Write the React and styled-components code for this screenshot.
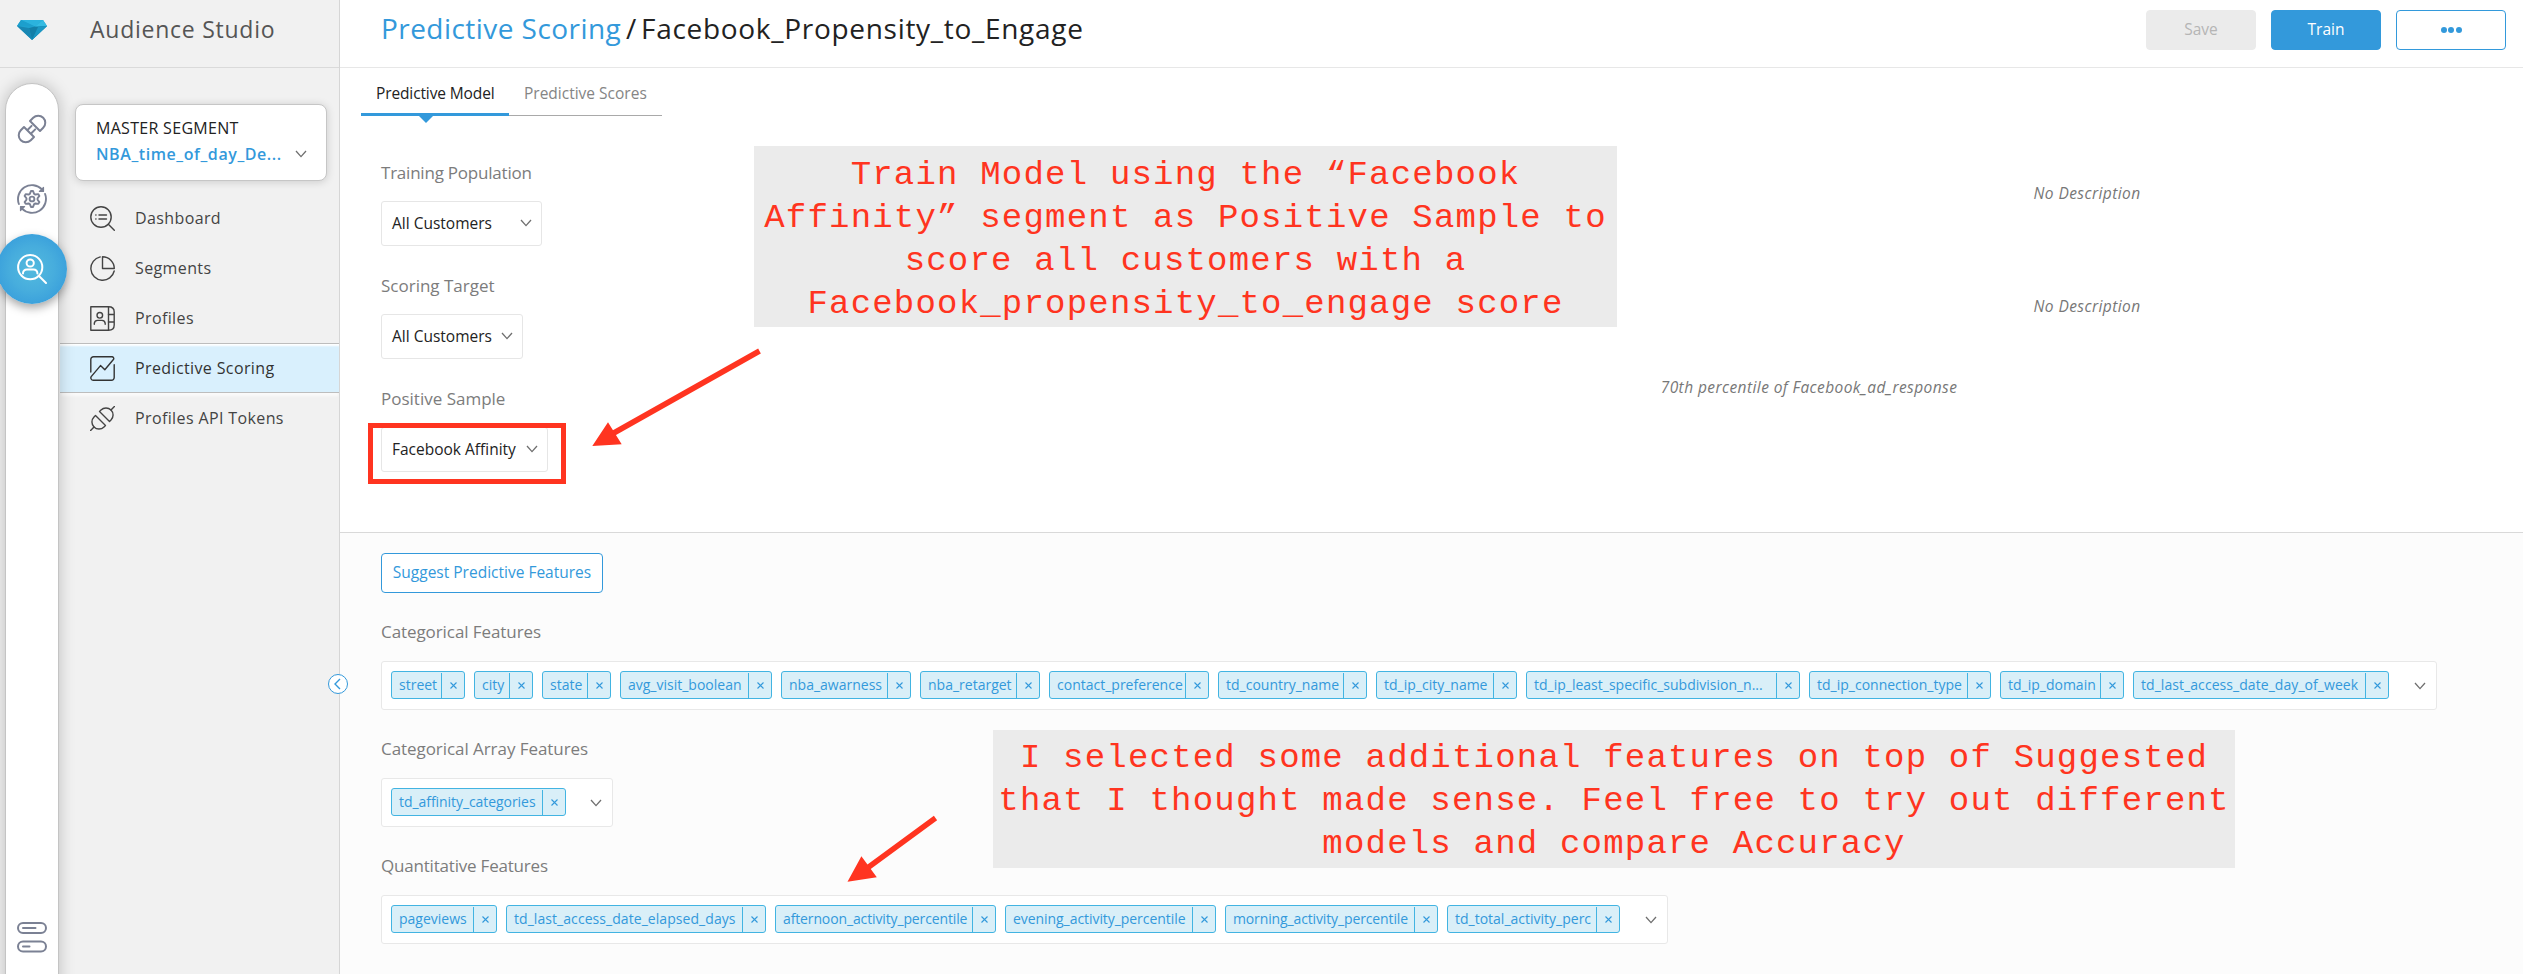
import React from "react";
import styled, { createGlobalStyle, css } from "styled-components";

const BLUE = "#3399db";
const RED = "#ff3420";

const GlobalStyle = createGlobalStyle`
  *, *::before, *::after { box-sizing: border-box; }
  body {
    margin: 0;
    font-family: "Open Sans", "Noto Sans", sans-serif;
    font-size: 16px;
    color: #222;
    background: #fff;
  }
`;

/* ---------- shell ---------- */

const Shell = styled.div`
  position: relative;
  display: flex;
  width: 2523px;
  height: 974px;
  overflow: hidden;
`;

const Sidebar = styled.aside`
  position: relative;
  display: flex;
  flex-direction: column;
  flex: none;
  width: 340px;
  background: #f1f1f1;
  border-right: 1px solid #d6d6d6;
`;

const Brand = styled.header`
  display: flex;
  flex: none;
  height: 68px;
  padding-left: 17px;
  border-bottom: 1px solid #dadada;

  svg { margin-top: 20px; }
`;

const BrandName = styled.span`
  margin-left: 43px;
  font-size: 23px;
  line-height: 58px;
  letter-spacing: 0.75px;
  color: #555;
  white-space: nowrap;
`;

const SidebarBody = styled.div`
  display: flex;
  flex: 1;
  overflow: hidden;
`;

const Rail = styled.div`
  position: relative;
  z-index: 1;
  display: flex;
  flex-direction: column;
  align-items: center;
  flex: none;
  width: 54px;
  margin: 15px 1px -40px 5px;
  padding: 30px 0 60px;
  background: #fff;
  border: 1px solid #c4c4c4;
  border-radius: 27px;
  box-shadow: 0 0 16px rgba(0, 0, 0, 0.22);
  color: #7b8194;
`;

const RailIcon = styled.div`
  height: 30px;
  margin-bottom: 40px;
  svg { display: block; }
`;

const RailActive = styled.div`
  display: flex;
  align-items: center;
  justify-content: center;
  width: 70px;
  height: 70px;
  margin-top: -20px;
  border-radius: 50%;
  background: radial-gradient(circle, #53bade 0%, #47addd 45%, #3399db 90%);
  box-shadow: 0 4px 10px rgba(0, 0, 0, 0.35);
  color: #fff;
`;

const RailBottom = styled.div`
  margin-top: auto;
  height: 31px;
`;

const SideNav = styled.nav`
  flex: 1;
  padding-top: 36px;
`;

const SegmentCard = styled.div`
  width: 252px;
  height: 77px;
  margin: 0 0 12px 15px;
  padding: 10px 19px 0 20px;
  background: #fff;
  border: 1px solid #c6c6c6;
  border-radius: 8px;
  box-shadow: 0 1px 9px rgba(0, 0, 0, 0.16);
  line-height: 26px;
  white-space: nowrap;
`;

const SegmentCaption = styled.div`
  letter-spacing: 0.3px;
  color: #222;
`;

const SegmentName = styled.div`
  display: flex;
  align-items: center;
  justify-content: space-between;
  font-weight: 600;
  letter-spacing: 0.58px;
  color: ${BLUE};
`;

const NavItem = styled.a`
  display: flex;
  align-items: center;
  gap: 20px;
  height: 50px;
  padding-left: 30px;
  line-height: 50px;
  letter-spacing: 0.38px;
  white-space: nowrap;
  color: #444;
  ${(p) =>
    p.$active &&
    css`
      background: #d9f0fd;
      border-top: 1px solid #bdbdbd;
      border-bottom: 1px solid #bdbdbd;
      box-shadow: 0 4px 2px -1px #fafafa, inset 0 3px 2px -1px #fff;
      color: #333;
      font-weight: 500;
    `}
`;

const CollapseToggle = styled.button`
  position: absolute;
  z-index: 2;
  top: 674px;
  right: -9px;
  display: flex;
  align-items: center;
  justify-content: center;
  width: 20px;
  height: 20px;
  padding: 0 2px 0 0;
  border: 1px solid ${BLUE};
  border-radius: 50%;
  background: #fff;
  color: ${BLUE};
`;

/* ---------- main column ---------- */

const Main = styled.main`
  display: flex;
  flex-direction: column;
  flex: 1;
  min-width: 0;
`;

const TitleBar = styled.header`
  display: flex;
  justify-content: space-between;
  flex: none;
  height: 68px;
  padding: 0 17px 0 41px;
  border-bottom: 1px solid #e7e7e7;
`;

const Title = styled.h1`
  display: flex;
  margin: 0;
  font-size: 28px;
  font-weight: 400;
  line-height: 57px;
  white-space: nowrap;
`;

const Crumb = styled.span`
  width: ${(p) => p.$w}px;
  letter-spacing: ${(p) => p.$track || 0}px;
  color: ${(p) => (p.$link ? BLUE : "#222")};
`;

const Actions = styled.div`
  display: flex;
  gap: 15px;
  padding-top: 10px;
`;

const actionTones = {
  disabled: css`background: #ebebeb; border-color: #ebebeb; color: #b5b5b5;`,
  primary: css`background: ${BLUE}; border-color: ${BLUE}; color: #fff;`,
  outline: css`background: #fff; border-color: ${BLUE}; color: ${BLUE};`,
};

const ActionButton = styled.button`
  display: flex;
  align-items: center;
  justify-content: center;
  width: 110px;
  height: 40px;
  padding: 0 0 2px;
  border: 1px solid;
  border-radius: 4px;
  font: 15.5px "Open Sans", sans-serif;
  ${(p) => actionTones[p.$tone]}
`;

const Dots = styled.span`
  display: flex;
  gap: 1.5px;
  padding-top: 2px;
  i { width: 6px; height: 6px; border-radius: 50%; background: currentColor; }
`;

const Tabs = styled.div`
  display: flex;
  height: 48px;
  margin-left: 21px;
`;

const Tab = styled.a`
  position: relative;
  width: ${(p) => p.$w}px;
  height: 48px;
  padding: 2px 0 0 15px;
  font-size: 15.5px;
  line-height: 46px;
  letter-spacing: ${(p) => p.$track || 0}px;
  white-space: nowrap;
  color: ${(p) => (p.$active ? "#222" : "#858585")};
  border-bottom: ${(p) => (p.$active ? `3px solid ${BLUE}` : "1px solid #a9a9a9")};

  ${(p) =>
    p.$active &&
    css`
      &::after {
        content: "";
        position: absolute;
        left: 58px;
        top: 48px;
        border: 7px solid transparent;
        border-top-color: ${BLUE};
        border-bottom: 0;
      }
    `}
`;

const PopulationSection = styled.section`
  flex: none;
  height: 417px;
  padding: 45px 0 0 41px;
  border-bottom: 1px solid #d9d9d9;
`;

const FieldRow = styled.div`
  display: flex;
  justify-content: space-between;
  height: 113px;
`;

const Label = styled.div`
  margin-bottom: ${(p) => p.$gap || 16}px;
  font-size: 17px;
  line-height: 24px;
  letter-spacing: ${(p) => p.$track || 0}px;
  white-space: nowrap;
  color: #7c7c7c;
`;

const Select = styled.div`
  display: flex;
  align-items: center;
  justify-content: space-between;
  width: ${(p) => p.$w}px;
  height: 45px;
  padding: 0 9px 2px 10px;
  border: 1px solid #e6e6e6;
  border-radius: 3px;
  background: #fff;
  font-size: 15.5px;
  white-space: nowrap;
  color: #222;
`;

const Description = styled.p`
  width: ${(p) => p.$w}px;
  margin: ${(p) => p.$top}px 0 0;
  font-size: 15.5px;
  font-style: italic;
  line-height: 24px;
  letter-spacing: 0.42px;
  text-align: center;
  color: #777;
`;

const FeatureSection = styled.section`
  flex: 1;
  padding: 20px 0 0 41px;
  background: #fcfcfc;
`;

const SuggestButton = styled.button`
  width: 222px;
  height: 40px;
  margin-bottom: 27px;
  padding: 0 0 2px;
  border: 1px solid ${BLUE};
  border-radius: 4px;
  background: #fff;
  color: ${BLUE};
  font: 15.5px "Open Sans", sans-serif;
  white-space: nowrap;
`;

const ChipBox = styled.div`
  display: flex;
  gap: 9px;
  width: ${(p) => p.$w}px;
  height: 49px;
  margin-bottom: 27px;
  padding: 9px 10px 0 9px;
  border: 1px solid #e8e8e8;
  border-radius: 3px;
  background: #fff;

  > svg { margin: 11px 0 0 auto; }
`;

const Chip = styled.span`
  display: flex;
  flex: none;
  width: ${(p) => p.$w}px;
  height: 28px;
  border: 1px solid #42b4e2;
  border-radius: 3px;
  background: #d9eff8;
  color: ${BLUE};
  font-size: 14px;
  line-height: 25px;
  white-space: nowrap;
`;

const ChipText = styled.span`
  flex: 1;
  padding-left: 7px;
  letter-spacing: ${(p) => p.$track || 0}px;
`;

const ChipRemove = styled.span`
  display: flex;
  align-items: center;
  justify-content: center;
  width: 23px;
  margin: 1px 0 0;
  border-left: 1px solid #42b4e2;
`;

/* ---------- annotations laid over the page ---------- */

const Note = styled.div`
  position: absolute;
  left: ${(p) => p.$x}px;
  top: ${(p) => p.$y}px;
  width: ${(p) => p.$w}px;
  height: ${(p) => p.$h}px;
  padding-top: ${(p) => p.$pad}px;
  background: #ebebeb;
  color: ${RED};
  font-family: "Liberation Mono", monospace;
  font-size: 34px;
  line-height: 43px;
  letter-spacing: 1.2px;
  text-align: center;
  white-space: pre;
`;

const Highlight = styled.div`
  position: absolute;
  left: 368px;
  top: 423px;
  width: 198px;
  height: 61px;
  border: 5px solid ${RED};
`;

const ArrowLayer = styled.svg`
  position: absolute;
  left: 0;
  top: 0;
  pointer-events: none;
`;

/* ---------- icons ---------- */

const Icon = ({ size, stroke = 2, children }) => (
  <svg
    width={size}
    height={size}
    viewBox={`0 0 ${size} ${size}`}
    fill="none"
    stroke="currentColor"
    strokeWidth={stroke}
    strokeLinecap="round"
    strokeLinejoin="round"
  >
    {children}
  </svg>
);

const DiamondLogo = () => (
  <svg width="30" height="20" viewBox="0 0 30 20">
    <path d="M4 0H26L30 6L15 20L0 6Z" fill="#1fa3d0" />
    <path d="M4 0H26L18 6.5Z" fill="#2bb3de" />
    <path d="M4 0L18 6.5L0 6Z" fill="#1c9fcd" />
    <path d="M0 6L12 8L15 20Z" fill="#1887b3" />
    <path d="M12 8L18 6.5L30 6L15 20Z" fill="#137fa8" />
    <path d="M26 0L30 6L18 6.5Z" fill="#35bbe2" />
    <path d="M30 6L15 20L21 7Z" fill="#1b98c4" />
  </svg>
);

const Chevron = () => (
  <svg width="12" height="8" viewBox="0 0 12 8" fill="none" stroke="#6f6f6f" strokeWidth="1.3">
    <path d="M1 1L6 6.6L11 1" />
  </svg>
);

const CloseGlyph = () => (
  <svg width="7" height="7" viewBox="0 0 7 7" stroke={BLUE} strokeWidth="1.1">
    <path d="M.5 .5L6.5 6.5M6.5 .5L.5 6.5" />
  </svg>
);

const ConnectorIcon = () => (
  <Icon size={30}>
    <path d="M13 7L23 17L26.2 13.8A7.07 7.07 0 0 0 16.2 3.8Z" />
    <path d="M7 13L17 23L13.8 26.2A7.07 7.07 0 0 1 3.8 16.2Z" />
    <path d="M11 15.5L14.6 11.9M14.6 19L18.2 15.4" />
  </Icon>
);

const gearPath = Array.from({ length: 24 }, (_, i) => {
  const angle = ((i * 15 - 82.5) * Math.PI) / 180;
  const radius = i % 4 === 3 || i % 4 === 0 ? 8 : 5.6;
  return `${i ? "L" : "M"}${(15 + radius * Math.cos(angle)).toFixed(2)} ${(15 + radius * Math.sin(angle)).toFixed(2)}`;
}).join("") + "Z";

const SyncGearIcon = () => (
  <Icon size={30} stroke={1.9}>
    <path d="M1.9 20A14 14 0 0 1 25 5.3M28.1 10A14 14 0 0 1 5 24.7" />
    <path d="M26.5 3.5V7.4H22.4ZM3.5 26.5V22.6H7.6Z" fill="currentColor" strokeWidth="1.2" />
    <path d={gearPath} />
    <circle cx="15" cy="15" r="2.4" />
  </Icon>
);

const AudienceIcon = () => (
  <Icon size={30} stroke={2}>
    <circle cx="13.2" cy="13.2" r="12.1" />
    <path d="M22 22L29 29" />
    <circle cx="13.2" cy="9" r="3.6" />
    <path d="M6 19.5V19A4 4 0 0 1 10 15.4H16.5A4 4 0 0 1 20.4 19V19.5" />
  </Icon>
);

const ToggleListIcon = () => (
  <svg width="30" height="31" viewBox="0 0 30 31" fill="none" stroke="currentColor" strokeWidth="2" strokeLinecap="round">
    <rect x="1" y="1" width="28" height="10" rx="5" />
    <rect x="1" y="19.5" width="28" height="10" rx="5" />
    <path d="M6 6H18.5M6 24.5H12.5" />
  </svg>
);

const DashboardIcon = () => (
  <Icon size={25} stroke={1.4}>
    <circle cx="11" cy="11" r="10.2" />
    <path d="M18.3 18.3L24.3 24.3M9 9H16.5M9 13H16.5M5.8 9H6M5.8 13H6" />
  </Icon>
);

const PieIcon = () => (
  <Icon size={25} stroke={1.4}>
    <path d="M10.2 .9A11.8 11.8 0 1 0 24.2 15" />
    <path d="M12.5 .8V12.5H24.3A11.8 11.8 0 0 0 12.5 .8Z" />
  </Icon>
);

const ProfilesIcon = () => (
  <Icon size={25} stroke={1.4}>
    <path d="M.8 .8H18.5V24.2H.8Z" />
    <path d="M18.5 .8C22 .8 24.2 2.6 24.2 6V19C24.2 22.4 22 24.2 18.5 24.2M18.5 8.5H24.2M18.5 16H24.2" />
    <circle cx="9.8" cy="9.3" r="2.8" />
    <path d="M4.3 18.3V17.5A3.3 3.3 0 0 1 7.5 14.4H12A3.3 3.3 0 0 1 15.2 17.5V18.3" />
  </Icon>
);

const ScoringIcon = () => (
  <Icon size={25} stroke={1.4}>
    <path d="M.8 16V3.5A2.7 2.7 0 0 1 3.5 .8H22A1.7 1.7 0 0 1 23.6 3.2L14.8 13.8L10.5 9.6L1.2 20.6C.2 22.2 1.4 24.2 3.2 24.2H21.5A2.7 2.7 0 0 0 24.2 21.5V8.8" />
  </Icon>
);

const PlugIcon = () => (
  <Icon size={25} stroke={1.4}>
    <path d="M9.5 5.5L19.5 15.5L21 14A7.07 7.07 0 0 0 11 4Z" />
    <path d="M5.5 9.5L15.5 19.5L14 21A7.07 7.07 0 0 1 4 11Z" />
    <path d="M.6 24.4L4 21M24.4 .6L21 4" />
  </Icon>
);

/* ---------- content ---------- */

const navItems = [
  { text: "Dashboard", icon: DashboardIcon },
  { text: "Segments", icon: PieIcon },
  { text: "Profiles", icon: ProfilesIcon },
  { text: "Predictive Scoring", icon: ScoringIcon, active: true },
  { text: "Profiles API Tokens", icon: PlugIcon },
];

const fields = [
  { label: "Training Population", track: -0.22, value: "All Customers", width: 161, note: "No Description", noteWidth: 872, noteTop: 20 },
  { label: "Scoring Target", value: "All Customers", width: 142, note: "No Description", noteWidth: 872, noteTop: 20 },
  { label: "Positive Sample", value: "Facebook Affinity", width: 167, note: "70th percentile of Facebook_ad_response", noteWidth: 1428, noteTop: -12 },
];

const featureGroups = [
  {
    label: "Categorical Features",
    track: -0.08,
    width: 2056,
    chips: [
      ["street", 74],
      ["city", 59],
      ["state", 69],
      ["avg_visit_boolean", 152],
      ["nba_awarness", 130],
      ["nba_retarget", 120],
      ["contact_preference", 160],
      ["td_country_name", 149],
      ["td_ip_city_name", 141],
      ["td_ip_least_specific_subdivision_n...", 274],
      ["td_ip_connection_type", 182],
      ["td_ip_domain", 124],
      ["td_last_access_date_day_of_week", 256, 0.06],
    ],
  },
  {
    label: "Categorical Array Features",
    track: -0.06,
    width: 232,
    chips: [["td_affinity_categories", 175, -0.06]],
  },
  {
    label: "Quantitative Features",
    track: -0.2,
    width: 1287,
    chips: [
      ["pageviews", 106],
      ["td_last_access_date_elapsed_days", 260, 0.06],
      ["afternoon_activity_percentile", 221, -0.13],
      ["evening_activity_percentile", 211, -0.06],
      ["morning_activity_percentile", 213, -0.13],
      ["td_total_activity_perc", 173],
    ],
  },
];

const noteOne = `Train Model using the “Facebook
Affinity” segment as Positive Sample to
score all customers with a
Facebook_propensity_to_engage score`;

const noteTwo = `I selected some additional features on top of Suggested
that I thought made sense. Feel free to try out different
models and compare Accuracy`;

export default function App() {
  return (
    <Shell>
      <GlobalStyle />
      <Sidebar>
        <Brand>
          <DiamondLogo />
          <BrandName>Audience Studio</BrandName>
        </Brand>
        <SidebarBody>
          <Rail>
            <RailIcon><ConnectorIcon /></RailIcon>
            <RailIcon><SyncGearIcon /></RailIcon>
            <RailActive><AudienceIcon /></RailActive>
            <RailBottom><ToggleListIcon /></RailBottom>
          </Rail>
          <SideNav>
            <SegmentCard>
              <SegmentCaption>MASTER SEGMENT</SegmentCaption>
              <SegmentName>
                NBA_time_of_day_De...
                <Chevron />
              </SegmentName>
            </SegmentCard>
            {navItems.map(({ text, icon: Glyph, active }) => (
              <NavItem key={text} $active={active}>
                <Glyph />
                {text}
              </NavItem>
            ))}
          </SideNav>
        </SidebarBody>
        <CollapseToggle aria-label="Collapse">
          <svg width="7" height="12" viewBox="0 0 7 12" fill="none" stroke="currentColor" strokeWidth="1.4">
            <path d="M6 1L1 6L6 11" />
          </svg>
        </CollapseToggle>
      </Sidebar>

      <Main>
        <TitleBar>
          <Title>
            <Crumb $link $w={245} $track={0.45}>Predictive Scoring</Crumb>
            <Crumb $w={15}>/</Crumb>
            <Crumb $track={0.7}>Facebook_Propensity_to_Engage</Crumb>
          </Title>
          <Actions>
            <ActionButton $tone="disabled">Save</ActionButton>
            <ActionButton $tone="primary">Train</ActionButton>
            <ActionButton $tone="outline" aria-label="More">
              <Dots><i /><i /><i /></Dots>
            </ActionButton>
          </Actions>
        </TitleBar>

        <Tabs>
          <Tab $active $w={148} $track={-0.12}>Predictive Model</Tab>
          <Tab $w={153}>Predictive Scores</Tab>
        </Tabs>

        <PopulationSection>
          {fields.map((f) => (
            <FieldRow key={f.label}>
              <div>
                <Label $track={f.track}>{f.label}</Label>
                <Select $w={f.width}>
                  {f.value}
                  <Chevron />
                </Select>
              </div>
              <Description $w={f.noteWidth} $top={f.noteTop}>{f.note}</Description>
            </FieldRow>
          ))}
        </PopulationSection>

        <FeatureSection>
          <SuggestButton>Suggest Predictive Features</SuggestButton>
          {featureGroups.map((group) => (
            <React.Fragment key={group.label}>
              <Label $gap={17} $track={group.track}>{group.label}</Label>
              <ChipBox $w={group.width}>
                {group.chips.map(([text, width, track]) => (
                  <Chip key={text} $w={width}>
                    <ChipText $track={track}>{text}</ChipText>
                    <ChipRemove><CloseGlyph /></ChipRemove>
                  </Chip>
                ))}
                <Chevron />
              </ChipBox>
            </React.Fragment>
          ))}
        </FeatureSection>
      </Main>

      <Note $x={754} $y={146} $w={863} $h={181} $pad={8}>{noteOne}</Note>
      <Note $x={993} $y={730} $w={1242} $h={138} $pad={7}>{noteTwo}</Note>
      <Highlight />
      <ArrowLayer width="2523" height="974" stroke={RED} strokeWidth="5.5" fill={RED}>
        <path d="M759.5 351L612 434M935.5 818L866 869" />
        <path d="M592.3 446L608 422.3L621.7 444.3ZM847.5 881.7L861.4 856.3L876.8 877.3Z" stroke="none" />
      </ArrowLayer>
    </Shell>
  );
}
